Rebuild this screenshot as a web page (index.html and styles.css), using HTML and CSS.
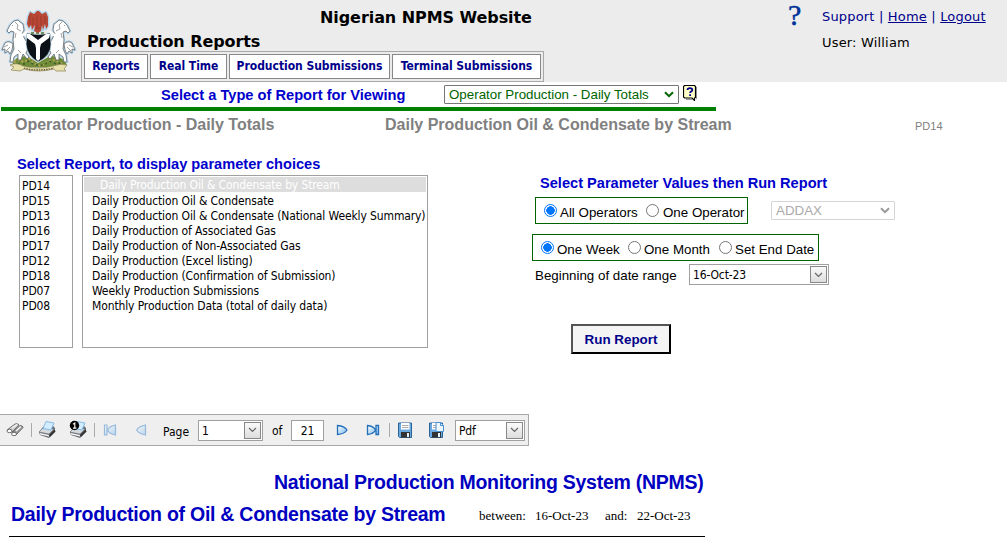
FILE: index.html
```html
<!DOCTYPE html>
<html lang="en">
<head>
<meta charset="utf-8">
<title>Nigerian NPMS Website</title>
<link rel="stylesheet" href="styles.css">
</head>
<body>
<header class="header">
  <svg class="emblem" viewBox="0 0 80 72" width="80" height="72">
    <defs>
      <path id="body" d="M7 26L10 20L14 16L18 15L20 17L23 19L24 25L22 29L26 36L28 44L26 48L29 52L27 54L23 49L21 55L18 55L18 49L14 52L13 57L10 57L11 50L14 44L13 35L14 27L11 26L9 28Z"/>
      <path id="tail" d="M13 39Q9 35 5 38Q3 42 2 45L5 44L5 48L8 46L10 49L12 45Z"/>
      <path id="eagle" d="M37 6L39 6L42 9L46 7L48 12L48 21L46 24L45 19L43 25L42 20L41 26L38 28L34 26L35 20L32 25L31 20L29 23L27 19L28 12L30 7L34 9L35 8Z"/>
    </defs>
    <g fill="#a5d2f0" stroke="#a5d2f0" stroke-width="2.600" stroke-linejoin="round" opacity=".8">
      <use href="#eagle"/><use href="#body"/><use href="#tail"/>
      <g transform="matrix(-1 0 0 1 77 0)"><use href="#body"/><use href="#tail"/></g>
    </g>
    <path d="M12 60Q14 51 27 51L38 58L50 51Q64 51 67 60Q38 65 12 60Z" fill="#6c8c38"/>
    <path d="M14 57l5-2 5 2 5-3 6 5 6 2 8-5 6-1 8 4" fill="none" stroke="#b9a34b" stroke-width="2" stroke-dasharray="2 2"/>
    <path d="M18 59l6 0 5-3 5 4 10 0 5-4 7 3 5-1" fill="none" stroke="#37572c" stroke-width="1.5" stroke-dasharray="2 3"/>
    <g id="horse">
      <use href="#tail" fill="#fff" stroke="#666" stroke-width=".8"/>
      <use href="#body" fill="#fff" stroke="#666" stroke-width=".8"/>
      <path d="M21 31L28 27M23 37L28 39L27 43" fill="none" stroke="#fff" stroke-width="3"/>
      <path d="M15 17L18 20L17 24L21 26M16 28L15 33M12 20l1 1M4 42l4-2M6 46l4-4M18 45l3 3" fill="none" stroke="#888" stroke-width=".8"/>
    </g>
    <use href="#horse" transform="matrix(-1 0 0 1 77 0)"/>
    <path d="M27 28Q38 31 50 28L51 39Q51 51 38 57Q27 51 26 39Z" fill="#0b1116" stroke="#b7d6e8" stroke-width=".7"/>
    <path d="M27 29L30 29L38 35L46 29L50 29L49 33L41 39L40 43L40 54L38 56L36 54L36 43L35 39L27 33Z" fill="#fff"/>
    <path d="M31 28H46" stroke="#e6e6dc" stroke-width="2"/>
    <path d="M31 28H46" stroke="#47713d" stroke-width="1.5" stroke-dasharray="3 2"/>
    <use href="#eagle" fill="#b84835"/>
    <path d="M30 10v9M33 12v8M37 10v14M41 11v10M45 11v8M35 23h6" stroke="#94362b" stroke-width=".8" fill="none"/>
    <path d="M10 60Q17 57 23 61Q38 65 53 61Q61 58 67 60L64 64L66 66L56 66L54 64Q38 68 24 64L20 66L11 65L14 62Z" fill="#e9e1ac" stroke="#8a8355" stroke-width=".7"/>
    <path d="M24 63Q38 67 54 63" stroke="#5f5733" stroke-width="1.3" stroke-dasharray="1.5 1" fill="none"/>
  </svg>
  <div class="brand">
    <h1 class="site-title"><span class="t-site">Nigerian NPMS Website</span></h1>
    <h2 class="section-title"><span class="t-section">Production Reports</span></h2>
    <nav class="menu">
      <a class="menu-item m1">Reports</a><a class="menu-item m2">Real Time</a><a class="menu-item m3">Production Submissions</a><a class="menu-item m4">Terminal Submissions</a>
    </nav>
  </div>
  <div class="help-mark">?</div>
  <div class="account">
    <div class="links"><span>Support</span> | <a>Home</a> | <a>Logout</a></div>
    <div class="user">User: William</div>
  </div>
</header>

<section class="type-bar">
  <span class="type-label">Select a Type of Report for Viewing</span>
  <div class="select type-select"><span>Operator Production - Daily Totals</span>
    <svg class="chev" width="10" height="7" viewBox="0 0 10 7"><path d="M1 1.3l4 3.9 4-3.9" fill="none" stroke="#006400" stroke-width="2"/></svg>
  </div>
  <svg class="tip" width="15" height="16" viewBox="0 0 15 16"><path d="M13.500 2v12M3 14.500h6" stroke="#999"/><path d="M1.500 .5h10l1 1v11l-1 .5v2.500l-2.500-2.500h-7.500l-1-1v-10.500z" fill="#ffffc8" stroke="#000" stroke-width="1.200"/><path d="M4.500 5q0-1.800 2.400-1.800t2.400 1.700q0 1.200-1.300 1.700-.9.5-.9 1.500M7.100 9.200v1.700" fill="none" stroke="#00008b" stroke-width="1.800"/></svg>
</section>

<section class="titles">
  <span class="t-group">Operator Production - Daily Totals</span>
  <span class="t-report">Daily Production Oil &amp; Condensate by Stream</span>
  <span class="t-code">PD14</span>
</section>

<main class="main">
  <section class="chooser">
    <h3 class="heading choose-heading">Select Report, to display parameter choices</h3>
    <div class="lists">
      <ul class="list codes"><li>PD14</li><li>PD15</li><li>PD13</li><li>PD16</li><li>PD17</li><li>PD12</li><li>PD18</li><li>PD07</li><li>PD08</li></ul>
      <ul class="list names"><li class="selected">Daily Production Oil &amp; Condensate by Stream</li><li>Daily Production Oil &amp; Condensate</li><li>Daily Production Oil &amp; Condensate (National Weekly Summary)</li><li>Daily Production of Associated Gas</li><li>Daily Production of Non-Associated Gas</li><li>Daily Production (Excel listing)</li><li>Daily Production (Confirmation of Submission)</li><li>Weekly Production Submissions</li><li>Monthly Production Data (total of daily data)</li></ul>
    </div>
  </section>
  <section class="params">
    <h3 class="heading param-heading">Select Parameter Values then Run Report</h3>
    <div class="operator-row">
      <div class="radios operators"><i class="radio on"></i><span class="r1">All Operators</span><i class="radio"></i><span class="r2">One Operator</span></div>
      <div class="select operator-select"><span>ADDAX</span>
        <svg class="chev" width="10" height="7" viewBox="0 0 10 7"><path d="M1 1.3l4 3.9 4-3.9" fill="none" stroke="#999" stroke-width="2"/></svg>
      </div>
    </div>
    <div class="radios period"><i class="radio on"></i><span class="r3">One Week</span><i class="radio"></i><span class="r4">One Month</span><i class="radio"></i><span class="r5">Set End Date</span></div>
    <div class="date-row"><span class="date-label">Beginning of date range</span>
      <div class="combo date-combo"><span>16-Oct-23</span><b class="drop"><svg width="9" height="6" viewBox="0 0 9 6"><path d="M1 1l3.500 3.500L8 1" fill="none" stroke="#666" stroke-width="1.2"/></svg></b></div>
    </div>
    <button class="run">Run Report</button>
  </section>
</main>

<div class="toolbar">
  <svg class="icons-left" width="158" height="24" viewBox="0 0 158 24">
    <defs>
      <linearGradient id="blue" x1="0" y1="0" x2="1" y2="1"><stop stop-color="#fff"/><stop offset="1" stop-color="#79b9ee"/></linearGradient>
      <g id="printer"><path d="M0 13L4 8L13 6L16 9L16 13L10 19L1 16Z" fill="#666b70"/><path d="M0 13L4 9L15 10L10 15Z" fill="#d5dade" stroke="#70767a" stroke-width=".6"/><path d="M4 9.500L7 2.500L15 4L12 11Z" fill="#d3ecff" stroke="#6daee2" stroke-width=".8"/><path d="M1 14L10 16L10 17.500L1 15.500Z" fill="#f5f5f5"/><path d="M10.500 17L16 11.500" stroke="#333" stroke-width="2"/></g>
    </defs>
    <g stroke="#555" stroke-width=".8"><path d="M7 12L15 6Q18 5 19 7L12 14Q8 15 7 12Z" fill="#ccc"/><path d="M12 15L20 7.500Q23 7.500 23 9.500L16 17Q13 18 12 15Z" fill="#999"/><ellipse cx="9.500" cy="13" rx="2.500" ry="1.700" fill="#fff"/><ellipse cx="14" cy="16" rx="2.500" ry="1.700" fill="#fff"/><path d="M12 10l5-3.500M16 13l5-4.500" stroke="#f4f4f4" stroke-width="1.500"/></g>
    <path d="M31.500 5v14M94.500 5v14" stroke="#aaa"/>
    <use href="#printer" x="39" y="1"/><use href="#printer" x="70" y="1"/>
    <circle cx="74.500" cy="7.500" r="4.700" fill="#000"/><path d="M73 6.200l1.800-1.200v5M73 10.100h3.400" fill="none" stroke="#fff" stroke-width="1.1"/>
    <g fill="url(#blue)" stroke="#2e7ac7" stroke-width="1.200" opacity=".45"><path d="M104.500 7h2.500v10h-2.500zM115.500 7v10q-6-1-8-5 2-4 8-5z"/><path d="M145.500 7v10q-6-1-9-5 3-4 9-5z"/></g>
  </svg>
  <span class="page-label">Page</span>
  <div class="combo page-combo"><span>1</span><b class="drop"><svg width="9" height="6" viewBox="0 0 9 6"><path d="M1 1l3.500 3.500L8 1" fill="none" stroke="#666" stroke-width="1.2"/></svg></b></div>
  <span class="of-label">of</span>
  <div class="page-total">21</div>
  <svg class="icons-right" width="121" height="24" viewBox="0 0 121 24">
    <defs><g id="disk"><path d="M.5 2h13v14.500H1.500l-1-1z" fill="#6aa9e0" stroke="#2b6296"/><path d="M3 2h8.500v6.500H3z" fill="#fff"/><path d="M4 4.500h6.500M4 6.500h6.500" stroke="#aaa"/><path d="M3 11h9v5.500H3z" fill="#333"/><path d="M9 12h2v4h-2z" fill="#e5f3ff"/></g></defs>
    <g fill="url(#blue)" stroke="#246fb8" stroke-width="1.300"><path d="M3.500 7.500q7 .5 9.500 4.500-2.500 4-9.500 4.500z"/><path d="M33.500 7.500q6 .5 8 4.500-2 4-8 4.500zM42 7.500h2.500v9h-2.500z"/></g>
    <path d="M55.500 5v14" stroke="#aaa"/>
    <use href="#disk" x="64" y="3"/><use href="#disk" x="95" y="3"/>
    <path d="M102 4.500h4.500l3 3v6h-7.500z" fill="#edf7ff" stroke="#4b91d0"/><path d="M106.500 4.500v3h3" fill="none" stroke="#4b91d0"/>
  </svg>
  <div class="combo format-combo"><span>Pdf</span><b class="drop"><svg width="9" height="6" viewBox="0 0 9 6"><path d="M1 1l3.500 3.500L8 1" fill="none" stroke="#666" stroke-width="1.2"/></svg></b></div>
</div>

<article class="report">
  <div class="system-title"><span>National Production Monitoring System (NPMS)</span></div>
  <div class="report-row"><span class="report-title">Daily Production of Oil &amp; Condensate by Stream</span><span class="between">between:</span><span class="from">16-Oct-23</span><span class="and">and:</span><span>22-Oct-23</span></div>
</article>
</body>
</html>
```
FILE: styles.css
```css
* { box-sizing: border-box; }
body { margin: 0; width: 1007px; height: 543px; overflow: hidden; background: #fff; color: #000; font-family: "Liberation Sans", Arial, sans-serif; white-space: nowrap; }
h1, h2, h3, ul { margin: 0; padding: 0; list-style: none; }
svg { display: block; flex: none; }

.header { display: flex; height: 82px; background: #ececec; }
.emblem { margin-top: 5px; }
.brand { width: 705px; padding: 7px 0 0 1px; }
.site-title { padding-left: 239px; font: bold 16px/22px "DejaVu Sans", Verdana, sans-serif; }
.t-site { letter-spacing: -.07px; }
.section-title { padding: 4px 0 0 6px; font: bold 16px/18px "DejaVu Sans", Verdana, sans-serif; letter-spacing: -.08px; }
.menu { display: flex; gap: 2px; width: 463px; height: 31px; padding: 2px; border: 1px solid #a8a8a8; }
.menu-item { height: 25px; border: 1px solid #888; background: #fff; color: #00008b; font: bold 12px/23px "DejaVu Sans Condensed", Tahoma, sans-serif; letter-spacing: -.03px; text-align: center; }
.m1 { width: 64px; }
.m2 { width: 77px; }
.m3 { width: 161px; }
.m4 { width: 149px; }
.help-mark { width: 37px; padding-left: 3px; color: #039; font: 30px/34px "Liberation Serif", serif; height: 34px; margin-top: -2px; -webkit-text-stroke: .5px #039; }
.account { padding-top: 7px; font: 13px/20px "DejaVu Sans", Verdana, sans-serif; letter-spacing: .18px; }
.links { color: #00008b; }
.links a { text-decoration: underline; }
.user { margin-top: 6px; }

.type-bar { display: flex; width: 715px; height: 29px; margin-left: 1px; padding: 3px 0 0 160px; border-bottom: 4px solid #008000; }
.type-label { width: 283px; color: #00c; font: bold 14.65px/20px "Liberation Sans", Arial, sans-serif; }
.select { display: flex; align-items: center; justify-content: space-between; height: 19px; padding: 0 4px; border: 1px solid #767676; border-radius: 1px; font-size: 13.33px; }
.type-select { width: 235px; color: #006400; }
.tip { margin: 0 0 0 4px; }

.titles { display: flex; height: 43px; padding: 4px 0 0 15px; color: #808080; font: bold 16px/20px "Liberation Sans", Arial, sans-serif; }
.t-group { width: 370px; }
.t-report { width: 530px; }
.t-code { padding-top: 1px; font-weight: normal; font-size: 11px; }

.main { display: flex; height: 260px; }
.chooser { width: 532px; padding-left: 17px; }
.heading { color: #00c; font: bold 14.6px/20px "Liberation Sans", Arial, sans-serif; }
.lists { display: flex; gap: 9px; margin-top: 1px; padding: 0 0 0 2px; }
.list { height: 173px; padding: 1px 0; border: 1px solid #a0a0a0; font: 12px/15px "DejaVu Sans Condensed", Tahoma, sans-serif; letter-spacing: -.12px; }
.codes { width: 54px; padding: 3px 0 0 2px; }
.names { width: 346px; padding: 1px 1px 0; }
.names li { padding-left: 8px; }
.names .selected { height: 15px; margin-bottom: 2px; padding: 1px 0 0 16px; background: #ddd; color: #fff; }
.params { padding-top: 19px; }
.param-heading { padding-left: 8px; }
.operator-row { display: flex; gap: 23px; margin: 4px 0 0 3px; }
.radios { display: flex; height: 27px; border: 1px solid #006400; font-size: 13.33px; line-height: 29px; }
.operators { width: 213px; padding-left: 8px; }
.period { width: 287px; margin-top: 10px; padding-left: 8px; }
.radio { flex: none; width: 13px; height: 13px; margin: 6px 3px 0 0; border: 1px solid #767676; border-radius: 50%; background: #fff; }
.radio.on { border-color: #0075ff; background: radial-gradient(circle, #0075ff 0 4px, #fff 4.500px); }
.r1 { width: 86px; }
.r2 { padding-left: 1px; }
.r3 { width: 71px; }
.r4 { width: 75px; }
.operator-select { width: 124px; margin-top: 4px; border-color: #d5d5d5; color: #aaa; }
.date-row { display: flex; margin-top: 3px; padding-left: 3px; font-size: 13.33px; line-height: 23px; height: 23px; }
.date-label { width: 154px; }
.combo { display: flex; align-items: center; justify-content: space-between; height: 21px; padding: 1px 1px 1px 3px; border: 1px solid #a0a0a0; background: #fff; font: 12px/19px "DejaVu Sans Condensed", Tahoma, sans-serif; letter-spacing: -.15px; }
.drop { display: flex; align-items: center; justify-content: center; width: 17px; height: 17px; border: 1px solid #888; background: linear-gradient(#fafafa, #ddd); }
.date-combo { width: 140px; }
.combo span { padding-top: 2px; }
.run { display: block; width: 100px; height: 30px; margin: 37px 0 0 39px; padding: 0; border: 2px outset #000; background: #f4f4f4; color: #00008b; font: bold 13.4px "Liberation Sans", Arial, sans-serif; }

.toolbar { display: flex; align-items: center; width: 529px; height: 32px; border: 1px solid #a8a8a8; border-left: 0; background: #efefef; font: 12px/20px "DejaVu Sans Condensed", Tahoma, sans-serif; }
.page-label { width: 40px; padding: 3px 0 0 5px; }
.page-combo { width: 65px; }
.of-label { width: 28px; padding: 2px 0 0 9px; }
.page-total { width: 33px; height: 21px; border: 1px solid #a0a0a0; background: #fff; line-height: 20px; text-align: center; }
.icons-right { margin-left: 10px; }
.format-combo { width: 70px; }

.report { width: 705px; height: 91px; padding-top: 26px; color: #0000c0; }
.system-title { padding-left: 274px; font: bold 19.5px/20px "Liberation Sans", Arial, sans-serif; letter-spacing: -.26px; }
.report-row { display: flex; height: 45px; margin-left: 9px; padding: 12px 0 0 2px; border-bottom: 1px solid #000; color: #000; font: 13px/24px "Liberation Serif", serif; }
.report-title { width: 468px; color: #0000c0; font: bold 19.5px/20px "Liberation Sans", Arial, sans-serif; letter-spacing: -.26px; }
.between { width: 56px; }
.from { width: 70px; }
.and { width: 32px; }
```
